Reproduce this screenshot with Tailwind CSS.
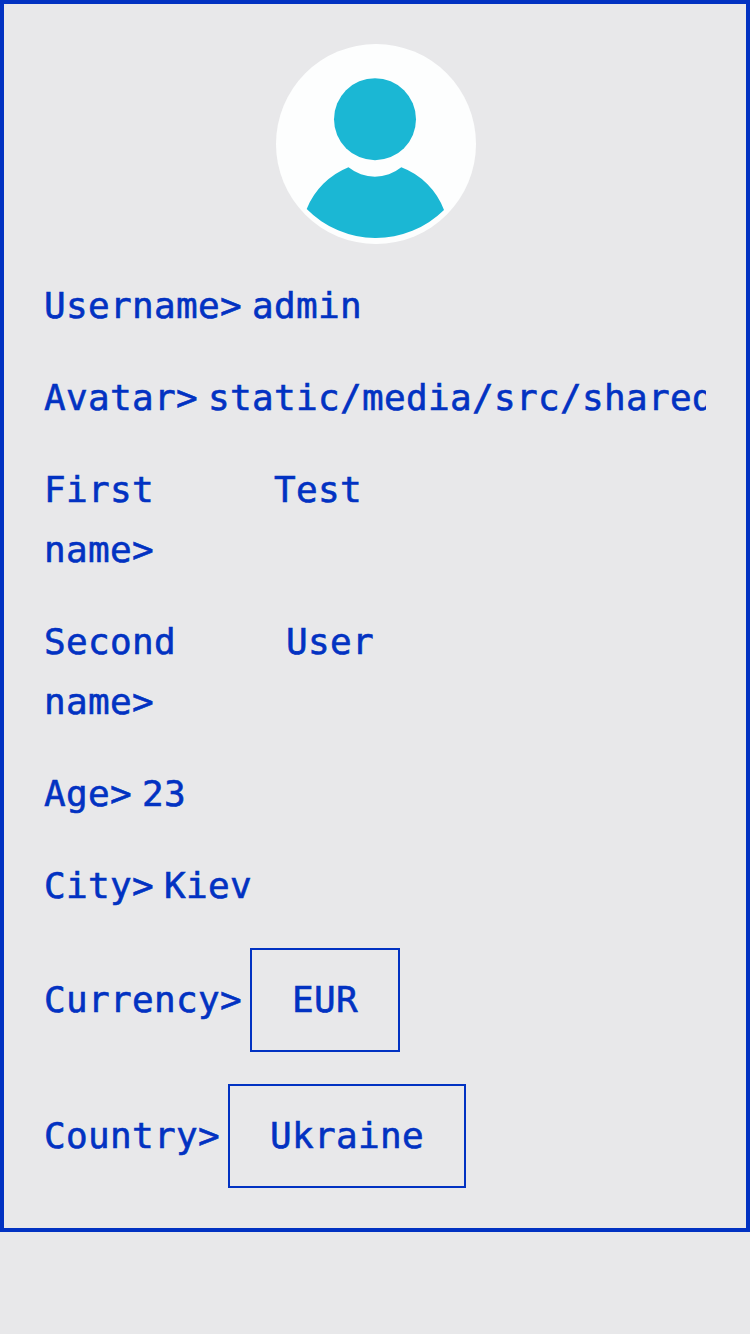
<!DOCTYPE html>
<html lang="en">
<head>
<meta charset="utf-8">
<title>Profile</title>
<script src="https://cdn.jsdelivr.net/npm/@tailwindcss/browser@4"></script>
</head>
<body class="bg-[#e8e8ea] overflow-hidden">
<main class="flex h-[1232px] w-full flex-col gap-8 border-4 border-[#0232c2] p-10 font-['DejaVu_Sans_Mono',monospace] text-[36px] leading-[60px] tracking-[0.33px] text-[#0232c2] [-webkit-text-stroke:0.6px_#0232c2]">
  <svg class="ml-[232px] size-[200px] shrink-0" viewBox="0 0 200 200" role="img" aria-label="Avatar">
    <circle cx="100" cy="100" r="100" fill="#fdfefe"/>
    <circle cx="99" cy="75.2" r="41" fill="#1bb7d4"/>
    <path d="M72.5 123.3A42 42 0 0 0 125.3 123.3A73 73 0 0 1 168 166A97 97 0 0 1 30.7 165A75 75 0 0 1 72.5 123.3Z" fill="#1bb7d4"/>
  </svg>
  <div class="flex gap-2.5"><span>Username&gt;</span><span>admin</span></div>
  <div class="flex gap-2.5 overflow-hidden"><span>Avatar&gt;</span><span class="whitespace-nowrap">static/media/src/shared</span></div>
  <div class="flex"><span class="w-[230px]">First<br>name&gt;</span><span>Test</span></div>
  <div class="flex"><span class="w-[242px]">Second<br>name&gt;</span><span>User</span></div>
  <div class="flex gap-2.5"><span>Age&gt;</span><span>23</span></div>
  <div class="flex gap-2.5"><span>City&gt;</span><span>Kiev</span></div>
  <div class="flex items-center gap-2"><span>Currency&gt;</span><span class="border-2 border-[#0232c2] px-10 py-5">EUR</span></div>
  <div class="flex items-center gap-2"><span>Country&gt;</span><span class="border-2 border-[#0232c2] px-10 py-5">Ukraine</span></div>
</main>
</body>
</html>
